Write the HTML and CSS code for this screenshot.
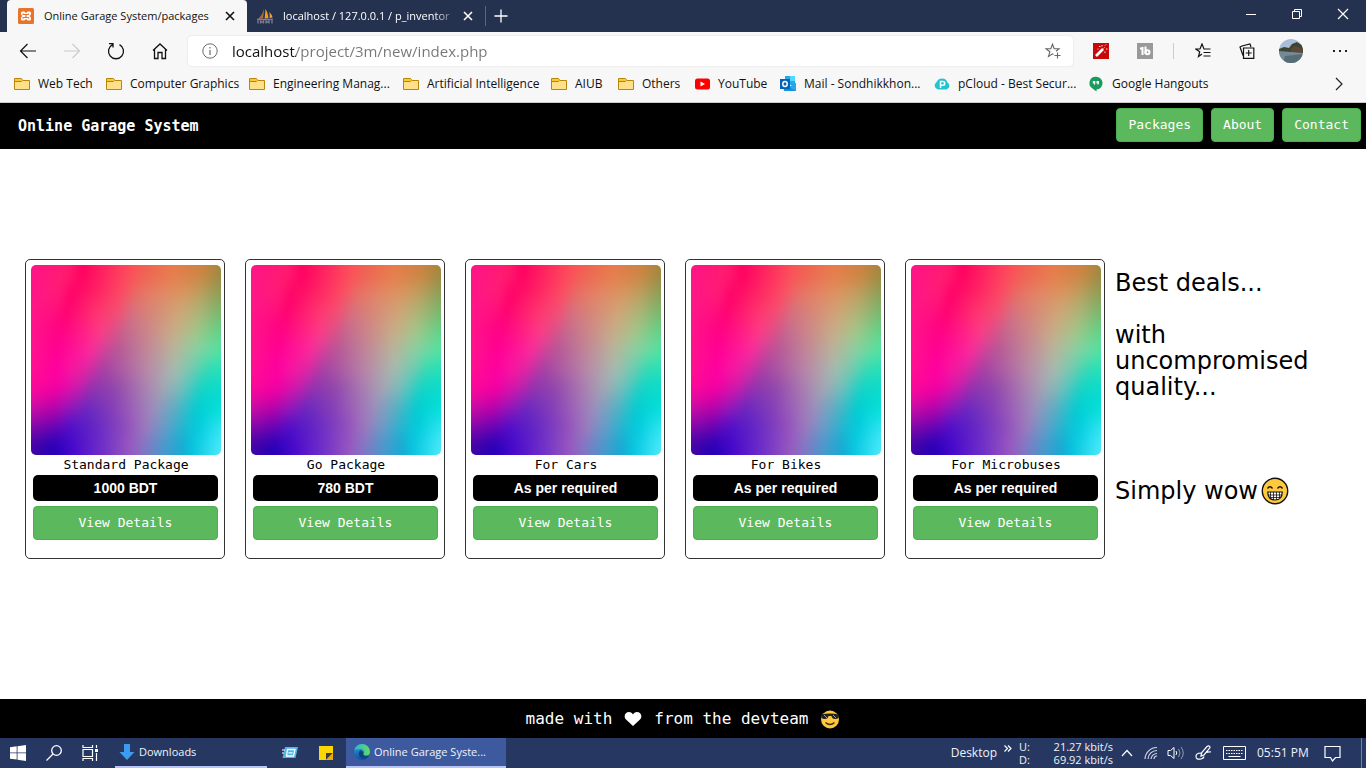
FILE: index.html
```html
<!DOCTYPE html>
<html lang="en">
<head>
<meta charset="utf-8">
<title>Online Garage System/packages</title>
<link rel="stylesheet" href="styles.css">
</head>
<body>
<svg class="defs" width="0" height="0" aria-hidden="true">
  <defs>
    <linearGradient id="across" gradientUnits="userSpaceOnUse" x1="0" y1="0" x2="190" y2="0"/>
    <linearGradient id="r0" href="#across"><stop offset="0" stop-color="#ff1488"/><stop offset=".2" stop-color="#ff1c6c"/><stop offset=".27" stop-color="#ff0062"/><stop offset=".4" stop-color="#ff2860"/><stop offset=".53" stop-color="#fc5058"/><stop offset=".62" stop-color="#ee6650"/><stop offset=".75" stop-color="#e87c4c"/><stop offset=".9" stop-color="#cc8440"/><stop offset="1" stop-color="#a08840"/></linearGradient>
    <linearGradient id="r1" href="#across"><stop offset="0" stop-color="#ff1688"/><stop offset=".15" stop-color="#ff1c74"/><stop offset=".21" stop-color="#ff0068"/><stop offset=".35" stop-color="#ff2464"/><stop offset=".48" stop-color="#fc4c62"/><stop offset=".56" stop-color="#e87064"/><stop offset=".68" stop-color="#e28866"/><stop offset=".8" stop-color="#d89860"/><stop offset=".9" stop-color="#b8a060"/><stop offset="1" stop-color="#88a058"/></linearGradient>
    <linearGradient id="r2" href="#across"><stop offset="0" stop-color="#ff1688"/><stop offset=".13" stop-color="#ff0e7c"/><stop offset=".18" stop-color="#ff0072"/><stop offset=".33" stop-color="#ff306e"/><stop offset=".46" stop-color="#f45074"/><stop offset=".53" stop-color="#d47080"/><stop offset=".65" stop-color="#d68a78"/><stop offset=".77" stop-color="#d0a478"/><stop offset=".88" stop-color="#aeb478"/><stop offset="1" stop-color="#78b86c"/></linearGradient>
    <linearGradient id="r3" href="#across"><stop offset="0" stop-color="#ff148c"/><stop offset=".15" stop-color="#ff0084"/><stop offset=".28" stop-color="#ff2084"/><stop offset=".37" stop-color="#ff3c88"/><stop offset=".44" stop-color="#dc5088"/><stop offset=".5" stop-color="#c46890"/><stop offset=".62" stop-color="#cc8888"/><stop offset=".75" stop-color="#c8ac88"/><stop offset=".86" stop-color="#a8c488"/><stop offset="1" stop-color="#5cd488"/></linearGradient>
    <linearGradient id="r4" href="#across"><stop offset="0" stop-color="#ff148c"/><stop offset=".14" stop-color="#ff0094"/><stop offset=".22" stop-color="#ff1098"/><stop offset=".32" stop-color="#fc2c9c"/><stop offset=".4" stop-color="#c84898"/><stop offset=".46" stop-color="#b45898"/><stop offset=".6" stop-color="#c08498"/><stop offset=".75" stop-color="#b8b49c"/><stop offset=".87" stop-color="#88d0a4"/><stop offset="1" stop-color="#54e4a0"/></linearGradient>
    <linearGradient id="r5" href="#across"><stop offset="0" stop-color="#ff1090"/><stop offset=".13" stop-color="#ff00a0"/><stop offset=".22" stop-color="#f818a0"/><stop offset=".3" stop-color="#dc28a4"/><stop offset=".38" stop-color="#a440a4"/><stop offset=".5" stop-color="#b064a4"/><stop offset=".63" stop-color="#b890a8"/><stop offset=".76" stop-color="#a4bcb0"/><stop offset=".86" stop-color="#6cccb0"/><stop offset=".93" stop-color="#30dcb4"/><stop offset="1" stop-color="#24e0b8"/></linearGradient>
    <linearGradient id="r6" href="#across"><stop offset="0" stop-color="#ff0898"/><stop offset=".14" stop-color="#f400a4"/><stop offset=".25" stop-color="#c81cac"/><stop offset=".33" stop-color="#8c34b0"/><stop offset=".45" stop-color="#9048ac"/><stop offset=".58" stop-color="#a878b0"/><stop offset=".7" stop-color="#a4a8b4"/><stop offset=".8" stop-color="#6cc0bc"/><stop offset=".9" stop-color="#10d4c8"/><stop offset="1" stop-color="#0cdccc"/></linearGradient>
    <linearGradient id="r7" href="#across"><stop offset="0" stop-color="#cc10a4"/><stop offset=".1" stop-color="#c000a8"/><stop offset=".2" stop-color="#9818b8"/><stop offset=".29" stop-color="#6828c0"/><stop offset=".42" stop-color="#843cb8"/><stop offset=".55" stop-color="#a068b8"/><stop offset=".65" stop-color="#9c90bc"/><stop offset=".77" stop-color="#58b0c4"/><stop offset=".87" stop-color="#04ccd0"/><stop offset="1" stop-color="#00e0d8"/></linearGradient>
    <linearGradient id="r8" href="#across"><stop offset="0" stop-color="#8808a8"/><stop offset=".12" stop-color="#6c04b4"/><stop offset=".21" stop-color="#4c10c8"/><stop offset=".35" stop-color="#6828c4"/><stop offset=".5" stop-color="#904cbc"/><stop offset=".6" stop-color="#a078bc"/><stop offset=".7" stop-color="#6c9cc8"/><stop offset=".8" stop-color="#20b8d0"/><stop offset=".88" stop-color="#00ccdc"/><stop offset="1" stop-color="#2ce4f0"/></linearGradient>
    <linearGradient id="r9" href="#across"><stop offset="0" stop-color="#4004a4"/><stop offset=".12" stop-color="#2400b8"/><stop offset=".22" stop-color="#4808cc"/><stop offset=".38" stop-color="#7030c8"/><stop offset=".52" stop-color="#9858c0"/><stop offset=".6" stop-color="#8078c4"/><stop offset=".7" stop-color="#4898cc"/><stop offset=".8" stop-color="#14acd4"/><stop offset=".86" stop-color="#08c8e0"/><stop offset="1" stop-color="#4ceafc"/></linearGradient>
    <filter id="melt" x="-10%" y="-10%" width="120%" height="120%" color-interpolation-filters="sRGB"><feGaussianBlur stdDeviation="3 9"/></filter>
    <linearGradient id="edgeBlue" x1="0" y1="0" x2="0" y2="1"><stop offset="0" stop-color="#2ba7dd"/><stop offset="1" stop-color="#0b4fa0"/></linearGradient>
    <linearGradient id="edgeGreen"><stop offset="0" stop-color="#2bb5d8"/><stop offset="1" stop-color="#62dd5c"/></linearGradient>
  </defs>
  <symbol id="art" viewBox="0 0 190 190">
    <g filter="url(#melt)">
      <rect x="-20" y="-40" width="230" height="59" fill="url(#r0)"/><rect x="-20" y="19" width="230" height="19" fill="url(#r1)"/><rect x="-20" y="38" width="230" height="19" fill="url(#r2)"/><rect x="-20" y="57" width="230" height="19" fill="url(#r3)"/><rect x="-20" y="76" width="230" height="19" fill="url(#r4)"/><rect x="-20" y="95" width="230" height="19" fill="url(#r5)"/><rect x="-20" y="114" width="230" height="19" fill="url(#r6)"/><rect x="-20" y="133" width="230" height="19" fill="url(#r7)"/><rect x="-20" y="152" width="230" height="19" fill="url(#r8)"/><rect x="-20" y="171" width="230" height="59" fill="url(#r9)"/>
    </g>
  </symbol>
  <symbol id="folder" viewBox="0 0 16 16"><path d="M.5 13.500V2.500h7l1.500 2h6.500v9z" fill="#ffe08a" stroke="#b8860b"/><path d="M1 3h6.200l1 1.500L7.500 5.500H1z" fill="#fbc92e"/><path d="M1 5.500h6.500l1-1" fill="none" stroke="#b8860b"/></symbol>
  <symbol id="cross" viewBox="0 0 10 10"><path d="M1 1l8 8M9 1L1 9" fill="none" stroke="currentColor" stroke-width="1.600"/></symbol>
</svg>

<header class="browser">
  <div class="tabs">
    <div class="tab tab-active">
      <svg width="16" height="16" viewBox="0 0 16 16"><rect width="16" height="16" rx="1.500" fill="#e8732a"/><path d="M4.500 3.500h1.800L8 5l1.700-1.500h1.800a1.500 1.500 0 0 1 1.500 1.500v1.500L11.500 8 13 9.500V11a1.500 1.500 0 0 1-1.500 1.500H9.700L8 11l-1.700 1.500H4.500A1.500 1.500 0 0 1 3 11V9.500L4.500 8 3 6.500V5a1.500 1.500 0 0 1 1.500-1.500z" fill="#fff"/><path d="M5 5.500v1h5.500v-1M5 10.500v-1h5.500v1M8 6.500v3" fill="none" stroke="#e8732a" stroke-width="1.200"/></svg>
      <a class="tab-title" href="#packages">Online Garage System/packages</a>
      <button class="tab-close" aria-label="Close tab"><svg width="10" height="10"><use href="#cross"/></svg></button>
    </div>
    <div class="tab tab-idle">
      <svg width="17" height="16" viewBox="0 0 17 16"><path d="M7 1C6 5 4 8 1 11l5-.5C6.500 7 7 4 7 1z" fill="#b06a3c"/><path d="M8.500 1l-.8 9.500 3.800-.3C11 6 10 3 8.500 1z" fill="#f89c0e"/><path d="M12 4c.8 2 1 4 .5 6l3-.4C15 7 14 5.500 12 4z" fill="#f6a339"/><path d="M0 11.500h16M1 12.500v3M3.500 12.500v3M6.500 12.500v3M9 12.500v3M12 12.500v3M15 12.500v3M3 14h3M9 14h3" fill="none" stroke="#7d7d96" stroke-width="1.300"/></svg>
      <a class="tab-title" href="#db">localhost / 127.0.0.1 / p_inventor</a>
      <button class="tab-close" aria-label="Close tab"><svg width="10" height="10"><use href="#cross"/></svg></button>
    </div>
    <button class="new-tab" aria-label="New tab"><svg width="14" height="14" viewBox="0 0 14 14"><path d="M7 .5v13M.5 7h13" stroke="#fff" stroke-width="1.300"/></svg></button>
    <div class="window-controls">
      <button aria-label="Minimize"><svg width="12" height="12" viewBox="0 0 12 12"><path d="M1 6.500h10" stroke="#fff"/></svg></button>
      <button aria-label="Restore"><svg width="12" height="12" viewBox="0 0 12 12" fill="none" stroke="#fff"><path d="M1.500 3.500h7v7h-7zM3.500 3V1.500h7v7H9"/></svg></button>
      <button aria-label="Close"><svg width="12" height="12" viewBox="0 0 12 12"><path d="M1 1l10 10M11 1L1 11" stroke="#fff" stroke-width="1.200"/></svg></button>
    </div>
  </div>

  <div class="toolbar">
    <button aria-label="Back"><svg width="18" height="16" viewBox="0 0 18 16" fill="none" stroke="#111" stroke-width="1.200"><path d="M17 8H1.500M8.500 1l-7 7 7 7"/></svg></button>
    <button aria-label="Forward" disabled><svg width="18" height="16" viewBox="0 0 18 16" fill="none" stroke="#ccc" stroke-width="1.200"><path d="M1 8h15.500M9.500 1l7 7-7 7"/></svg></button>
    <button aria-label="Refresh"><svg width="18" height="18" viewBox="0 0 18 18" fill="none" stroke="#111" stroke-width="1.300"><path d="M5.500 2.600a7.500 7.500 0 1 0 7 0M2 1.600h4v4"/></svg></button>
    <button aria-label="Home"><svg width="16" height="18" viewBox="0 0 16 18" fill="none" stroke="#111" stroke-width="1.300"><path d="M1 8.500L8 2l7 6.500M2.500 7.500v9H6v-6h4v6h3.500v-9"/></svg></button>
    <div class="address">
      <svg width="16" height="16" viewBox="0 0 16 16" fill="none" stroke="#6b6b6b"><circle cx="8" cy="8" r="7.200"/><path d="M8 7v5M8 4v1.500" stroke-width="1.200"/></svg>
      <input class="url" type="text" aria-label="Address" value="localhost/project/3m/new/index.php">
      <button class="star" aria-label="Add to favorites"><svg width="16" height="16" viewBox="0 0 16 16" fill="none" stroke="#666" stroke-width="1.100"><path d="M8.500 11.500L7.500 10.800 3.500 13.500l1.400-4.800L1 5.800h4.800L7.500 1.200 9.200 5.800H14l-3 2.400M12.500 9.500v6M9.500 12.500h6"/></svg></button>
    </div>
    <button aria-label="Magic wand"><svg width="16" height="16" viewBox="0 0 16 16"><rect width="16" height="16" fill="#c80909"/><path d="M3 13l7-7" stroke="#fff" stroke-width="2.600"/><path d="M10.500 5.500l1-1M6 3.500h1.500M9 2v1.500M12 2.500l1-1M13 6h1.500M12 8.500v1.500M4.500 6h1" stroke="#ffd9d9" stroke-width="1"/></svg></button>
    <button aria-label="Extension"><svg width="16" height="16" viewBox="0 0 16 16" fill="none" stroke="#fff" stroke-width="2"><rect width="16" height="16" fill="#999" stroke="none"/><path d="M5.500 4v8M3 5.500h3M8.500 3.500V11"/><circle cx="10.500" cy="9.200" r="2"/></svg></button>
    <span class="divider"></span>
    <button aria-label="Favorites"><svg width="16" height="16" viewBox="0 0 16 16" fill="none" stroke="#111" stroke-width="1.200"><path d="M7 11L3.500 13.500l1.200-4.800L.8 6H5L7 1l2 5h6.500M8.500 9.500h7M8.500 13h7"/></svg></button>
    <button aria-label="Collections"><svg width="16" height="16" viewBox="0 0 16 16" fill="none" stroke="#111" stroke-width="1.200"><path d="M4.500 5h10.300v10.300H4.500zM9.700 7v6M6.700 10h6M4 12.500L1 4l2-1 8-2 1 3"/></svg></button>
    <button aria-label="Profile"><svg width="24" height="24" viewBox="0 0 24 24"><defs><clipPath id="face"><circle cx="12" cy="12" r="12"/></clipPath></defs><g clip-path="url(#face)"><path d="M0 0h24v24H0z" fill="#a9bfd8"/><path d="M0 10l5-2 5 1 3-4 5-2 6 4v7H0z" fill="#3e4434"/><path d="M12 10l3-3 5 1 4 3v3H12z" fill="#5c4838"/><path d="M0 12l24 2v10H0z" fill="#748b95"/><path d="M6 17l18-2v9H4z" fill="#566d78"/></g></svg></button>
    <button class="more" aria-label="Settings and more"><svg width="16" height="4" viewBox="0 0 16 4"><path d="M1 1h2v2H1zM7 1h2v2H7zM13 1h2v2h-2z" fill="#222"/></svg></button>
  </div>

  <nav class="bookmarks" aria-label="Bookmarks">
    <a href="#b"><svg width="16" height="16"><use href="#folder"/></svg>Web Tech</a>
    <a href="#b"><svg width="16" height="16"><use href="#folder"/></svg>Computer Graphics</a>
    <a href="#b"><svg width="16" height="16"><use href="#folder"/></svg>Engineering Manag...</a>
    <a href="#b"><svg width="16" height="16"><use href="#folder"/></svg>Artificial Intelligence</a>
    <a href="#b"><svg width="16" height="16"><use href="#folder"/></svg>AIUB</a>
    <a href="#b"><svg width="16" height="16"><use href="#folder"/></svg>Others</a>
    <a href="#b"><svg width="15" height="16" viewBox="0 0 15 16"><rect y="2.500" width="15" height="11" rx="2.500" fill="#f00"/><path d="M5.500 5.500l4.500 2.500-4.500 2.500z" fill="#fff"/></svg>YouTube</a>
    <a href="#b"><svg width="16" height="16" viewBox="0 0 16 16"><path d="M5 0h10v9H5z" fill="#28a8ea"/><path d="M10 0h5v5h-5z" fill="#50d9ff"/><path d="M3 8l6 3 7-4v8H4z" fill="#1490df"/><path d="M16 15L9 11l7-4z" fill="#28a8ea"/><path d="M0 3h10v10H0z" fill="#0364b8"/><ellipse cx="5" cy="8" rx="2.200" ry="2.500" fill="none" stroke="#fff" stroke-width="1.500"/></svg>Mail - Sondhikkhon...</a>
    <a href="#b"><svg width="16" height="16" viewBox="0 0 16 16"><path d="M4 13.500a4 4 0 0 1-1.500-7.300A5.800 5.800 0 0 1 13.500 6.500 3.800 3.800 0 0 1 12.500 13.500z" fill="#20c5cf"/><path d="M6.500 12V5.500h2.300a1.900 1.900 0 0 1 0 3.800H6.500" fill="none" stroke="#fff" stroke-width="1.500"/></svg>pCloud - Best Secur...</a>
    <a href="#b"><svg width="16" height="16" viewBox="0 0 16 16"><path d="M8 .8a6.300 6.300 0 0 1 .5 12.600v2.100L4.500 12.500A6.300 6.300 0 0 1 8 .8z" fill="#179c5c"/><path d="M4.800 5h2.500v2.500L6 9.500V7.500H4.800zM8.500 5H11v2.500L9.700 9.500V7.500H8.500z" fill="#fff"/></svg>Google Hangouts</a>
    <button aria-label="More bookmarks"><svg width="8" height="14" viewBox="0 0 8 14"><path d="M1 1l6 6-6 6" fill="none" stroke="#222" stroke-width="1.200"/></svg></button>
  </nav>
</header>

<div class="site">
  <header class="site-head">
    <h1>Online Garage System</h1>
    <nav><a class="btn" href="#packages">Packages</a><a class="btn" href="#about">About</a><a class="btn" href="#contact">Contact</a></nav>
  </header>
  <main class="content" id="packages">
    <article class="card"><svg class="art" viewBox="0 0 190 190"><use href="#art"/></svg><h2>Standard Package</h2><p class="price">1000 BDT</p><button class="btn details">View Details</button></article>
    <article class="card"><svg class="art" viewBox="0 0 190 190"><use href="#art"/></svg><h2>Go Package</h2><p class="price">780 BDT</p><button class="btn details">View Details</button></article>
    <article class="card"><svg class="art" viewBox="0 0 190 190"><use href="#art"/></svg><h2>For Cars</h2><p class="price">As per required</p><button class="btn details">View Details</button></article>
    <article class="card"><svg class="art" viewBox="0 0 190 190"><use href="#art"/></svg><h2>For Bikes</h2><p class="price">As per required</p><button class="btn details">View Details</button></article>
    <article class="card"><svg class="art" viewBox="0 0 190 190"><use href="#art"/></svg><h2>For Microbuses</h2><p class="price">As per required</p><button class="btn details">View Details</button></article>
    <aside class="pitch">
      <p>Best deals...</p>
      <p>with uncompromised quality...</p>
      <p class="wow">Simply wow<svg width="28" height="28" viewBox="0 0 28 28"><circle cx="14" cy="14" r="12.700" fill="#ffc83d" stroke="#111" stroke-width="1.400"/><path d="M6.500 11.500q2.500-3.500 5 0M16.500 11.500q2.500-3.500 5 0" fill="none" stroke="#111" stroke-width="1.300"/><path d="M6.800 15h14.400q0 8-7.200 8t-7.200-8z" fill="#fff" stroke="#111" stroke-width="1.200"/><path d="M7 18h14M9.500 15v6M12.500 15v8M15.500 15v8M18.500 15v6M9 20.500h10" stroke="#111" stroke-width=".8"/></svg></p>
    </aside>
  </main>
  <footer class="site-foot">made with <svg width="18" height="16" viewBox="0 0 18 16"><path d="M9 15L2 8.500C-1 5 1.500 1 5 1c2 0 3.200 1 4 2.500C9.800 2 11 1 13 1c3.500 0 6 4 3 7.500z" fill="#fff"/></svg> from the devteam <svg class="cool" width="20" height="20" viewBox="0 0 20 20"><circle cx="10" cy="10.500" r="9" fill="#ffc83d"/><path d="M1 5.500q9-2 18 0l-.5 3Q18 10 15 10t-3.500-3h-3Q8 10 5 10T1.500 8.500z" fill="#222"/><path d="M4 6l3 3M13 6l3 3" stroke="#999"/><path d="M5.500 13.500q4.500 4 9 0" fill="none" stroke="#3a2a10" stroke-width="1.400"/></svg></footer>
</div>

<footer class="taskbar">
  <button aria-label="Start"><svg width="16" height="16" viewBox="0 0 16 16" fill="#fff"><path d="M0 2.200l6.700-.9v6.200H0zM7.500 1.200L16 0v7.500H7.500zM0 8.300h6.700v6.300L0 13.700zM7.500 8.300H16V16l-8.500-1.200z"/></svg></button>
  <button aria-label="Search"><svg width="16" height="16" viewBox="0 0 16 16" fill="none" stroke="#fff" stroke-width="1.300"><circle cx="10.500" cy="5.500" r="4.800"/><path d="M7 9L.5 15.500"/></svg></button>
  <button aria-label="Task view"><svg width="17" height="16" viewBox="0 0 17 16" fill="none" stroke="#fff" stroke-width="1.200"><path d="M1 4.500h9.500v7H1zM1 0v2.500h9.500V0M1 16v-2.500h9.500V16M14.500 0v3M14.500 8v8"/><path d="M13 4h3v3h-3z" fill="#fff" stroke="none"/></svg></button>
  <button class="app app-open"><svg width="16" height="16" viewBox="0 0 16 16"><path d="M5 0h6v8h4.500L8 16 .5 8H5z" fill="#3b9bf0"/></svg>Downloads</button>
  <button aria-label="Run"><svg width="16" height="14" viewBox="0 0 16 14"><path d="M3 1h13l-2.500 11H.5z" fill="#4eb3ea"/><path d="M5.500 3.500h7.500L11.500 10H4.500z" fill="#4eb3ea" stroke="#fff" stroke-width="1.300"/><path d="M6.500 6.800h4M0 4h3M0 7h2" stroke="#fff" stroke-width="1.200"/></svg></button>
  <button aria-label="Sticky notes"><svg width="14" height="14" viewBox="0 0 14 14"><path d="M0 0h14v14H0z" fill="#fcd600"/><path d="M7 7h7l-7 7z" fill="#3c3c3c"/><path d="M14 7v7H7z" fill="#f2a900"/></svg></button>
  <button class="app app-current"><svg width="16" height="16" viewBox="0 0 16 16"><circle cx="8" cy="8" r="8" fill="url(#edgeBlue)"/><path d="M.3 6A8 8 0 0 1 16 8c0 2.500-2 3.500-4 3.500S9 10.500 10 9c.8-2-1-4-4-4S1 6 .3 6z" fill="url(#edgeGreen)"/><path d="M6 6.500c-3 4 0 8.500 5 8.200 1.500-.2 3-1.500 3.800-2.700-2 .8-4 .5-5-.3S8.500 10 9.300 9C9 7.500 7.500 6 6 6.500z" fill="#123f80"/></svg>Online Garage Syste...</button>
  <div class="tray">
    <span class="desktop">Desktop</span>
    <button class="chevron" aria-label="More toolbars"><svg width="8" height="7" viewBox="0 0 8 7"><path d="M.5.500l3 3-3 3M4 .5l3 3-3 3" fill="none" stroke="#fff" stroke-width="1.200"/></svg></button>
    <dl class="net"><dt>U:</dt><dd>21.27 kbit/s</dd><dt>D:</dt><dd>69.92 kbit/s</dd></dl>
    <button aria-label="Show hidden icons"><svg width="12" height="8" viewBox="0 0 12 8"><path d="M1 7l5-5.500L11 7" fill="none" stroke="#fff" stroke-width="1.200"/></svg></button>
    <button aria-label="Network"><svg width="14" height="14" viewBox="0 0 14 14" fill="none" stroke="#d5dbea" stroke-width="1.100"><path d="M1 13A12 12 0 0 1 13 1.500M4 13a9 9 0 0 1 9-8.500M7 13a6 6 0 0 1 6-5.500M10 13a3 3 0 0 1 3-3"/></svg></button>
    <button aria-label="Volume"><svg width="17" height="14" viewBox="0 0 17 14" fill="none" stroke="#fff"><path d="M1 4.500h2.500L7 1.500v11L3.500 9.500H1zM9 5q1.500 2 0 4"/><path d="M11.500 3q3 4 0 8M14 1q4.500 6 0 12" stroke="#8c9abb"/></svg></button>
    <button class="pen" aria-label="Pen"><svg width="17" height="16" viewBox="0 0 17 16" fill="none" stroke="#fff" stroke-width="1.200"><path d="M6 11l.8-3.500L12 1.500q2-1.500 3 .5 0 1-.8 1.600L9 10zM6 8q-5 0-5 3.500T6 14q2.500-.5 3-2.500M11 7.500q3-1 5-.5"/></svg></button>
    <button class="keys" aria-label="Touch keyboard"><svg width="23" height="14" viewBox="0 0 23 14" fill="none" stroke="#fff"><path d="M.5.500h22v13H.5z"/><path d="M3 4.500h17M3 7.500h17" stroke-dasharray="1.500 1"/><path d="M5.500 10.500h12"/></svg></button>
    <time>05:51 PM</time>
    <button class="notes" aria-label="Notifications"><svg width="17" height="17" viewBox="0 0 17 17" fill="none" stroke="#fff" stroke-width="1.200"><path d="M1 1.500h15v11h-4.500L8.500 16l-2-3.500H1z"/></svg></button>
  </div>
</footer>
</body>
</html>
```
FILE: styles.css
```css
* { box-sizing: border-box; }
body {
  margin: 0;
  min-height: 100vh;
  display: flex;
  flex-direction: column;
  background: #fff;
  color: #111;
  font: 12px/16px "Open Sans", "Noto Sans", sans-serif;
}
svg { display: block; flex: none; }
.defs { position: absolute; }
a { color: inherit; text-decoration: none; }
button {
  display: flex;
  align-items: center;
  justify-content: center;
  padding: 0;
  border: 0;
  background: none;
  color: inherit;
  font: inherit;
}

/* Browser window */
.browser { background: #f7f7f7; border-bottom: 1px solid #ccc; }
.tabs { display: flex; height: 32px; padding-left: 7px; background: #25324f; color: #fff; }
.tab { display: flex; align-items: center; width: 240px; padding: 0 10px 0 11px; font-size: 11px; }
.tab-active { border-radius: 4px 4px 0 0; background: #f7f7f7; color: #111; }
.tab-idle { width: 238px; padding-left: 10px; }
.tab-title { flex: 1; min-width: 0; margin: 0 3px 0 10px; overflow: hidden; white-space: nowrap; }
.tab-idle .tab-title { margin-left: 9px; mask-image: linear-gradient(to left, transparent, #000 24px); }
.tab-close { width: 14px; height: 20px; }
.new-tab { width: 30px; margin: 6px 0; border-left: 1px solid #5c6579; }
.window-controls { display: flex; margin-left: auto; }
.window-controls button { width: 46px; height: 28px; }

.toolbar { display: flex; align-items: center; height: 38px; padding: 0 6px; }
.toolbar > button { width: 44px; height: 38px; flex: none; }
.toolbar > .more { width: 50px; padding-left: 3px; margin-right: -3px; }
.address {
  display: flex;
  align-items: center;
  flex: 1;
  height: 30px;
  margin: 0 6px;
  padding: 0 12px 0 14px;
  border-radius: 4px;
  background: #fff;
  box-shadow: 0 0 2px rgba(0, 0, 0, .12);
}
.url {
  flex: 1;
  min-width: 0;
  margin-left: 14px;
  padding: 0;
  border: 0;
  outline: 0;
  background: linear-gradient(to right, #111 64px, #767676 64px);
  background-clip: text;
  color: transparent;
  font: 15px/24px "Open Sans", "Noto Sans", sans-serif;
}
.divider { width: 1px; height: 16px; margin: 0 7px 0 6px; background: #ccc; }

.bookmarks {
  display: grid;
  grid-template-columns: 92px 143px 154px 148px 67px 77px 85px 154px 154px 1fr 36px;
  height: 32px;
  padding: 0 9px 4px 14px;
  align-items: center;
}
.bookmarks a { display: flex; align-items: center; gap: 8px; white-space: nowrap; }

/* Site */
.site { flex: 1; display: flex; flex-direction: column; font-family: "DejaVu Sans Mono", "Liberation Mono", monospace; }
.site-head {
  display: flex;
  align-items: center;
  justify-content: space-between;
  height: 46px;
  padding: 0 5px 0 18px;
  background: #000;
  color: #fff;
}
.site-head h1 { margin: 0; font-size: 15px; line-height: 20px; }
.site-head nav { display: flex; gap: 8px; padding-bottom: 2px; }
.btn {
  height: 34px;
  padding: 0 11px;
  border: 1px solid #4cae4c;
  border-radius: 4px;
  background: #5cb85c;
  color: #fff;
  font: 13px/32px "DejaVu Sans Mono", "Liberation Mono", monospace;
}
.content { flex: 1; display: flex; align-items: flex-start; gap: 20px; padding: 110px 25px 20px; }
.card {
  display: flex;
  flex-direction: column;
  flex: none;
  width: 200px;
  min-height: 300px;
  padding: 5px 3px 5px 5px;
  border: 1px solid #333;
  border-radius: 5px;
}
.art { width: 100%; aspect-ratio: 1; border-radius: 5px; overflow: hidden; }
.card h2 { margin: 0; font-size: 13px; line-height: 20px; font-weight: 400; color: #000; text-align: center; }
.price {
  margin: 0 3px 5px 2px;
  border-radius: 5px;
  background: #000;
  color: #fff;
  font: bold 14px/26px "Liberation Sans", Arial, sans-serif;
  text-align: center;
}
.details { margin: 0 3px 0 2px; }
.pitch { flex: 1; min-width: 0; margin-left: -10px; padding-top: 11px; font: 24px/26px "DejaVu Sans", Verdana, sans-serif; color: #000; }
.pitch p { margin: 0 0 26px; }
.pitch .wow { display: flex; align-items: center; margin-top: 78px; gap: 3px; height: 26px; white-space: nowrap; }
.site-foot {
  display: flex;
  align-items: center;
  justify-content: center;
  gap: 12px;
  height: 39px;
  background: #000;
  color: #fff;
  font-size: 16px;
  line-height: 20px;
}

/* Taskbar */
.taskbar { display: flex; align-items: stretch; height: 30px; background: #263862; color: #f0f2f8; }
.taskbar button { width: 36px; }
.taskbar .app { justify-content: flex-start; gap: 4px; white-space: nowrap; border-bottom: 2px solid #b6c4f8; font-size: 11px; }
.taskbar .app-open { width: 152px; margin: 0 5px 0 7px; padding-left: 4px; }
.taskbar .app-current { width: 160px; margin-left: 2px; padding-left: 8px; background: #3d5a9f; }
.tray { display: flex; align-items: center; margin-right: 4px; margin-left: auto; padding-right: 12px; border-right: 1px solid #7481a0; }
.tray button { width: 24px; height: 30px; }
.tray .chevron { width: 22px; padding-bottom: 10px; }
.net { display: grid; grid-template-columns: 34px 60px; margin: 0 2px 0 0; font-size: 11px; line-height: 13px; white-space: nowrap; }
.net dd { margin: 0; text-align: right; }
.tray .pen { width: 32px; }
.tray .keys { width: 30px; }
.tray time { width: 50px; margin-left: 8px; white-space: nowrap; }
.tray .notes { width: 34px; margin-left: 8px; }
```
